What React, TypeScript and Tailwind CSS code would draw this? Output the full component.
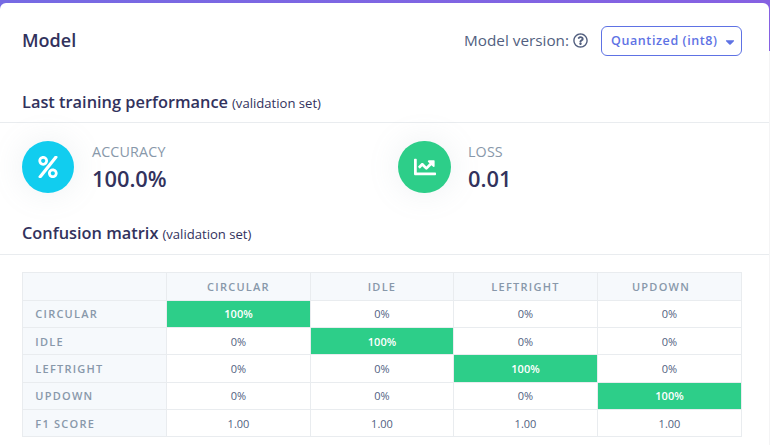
import { FaCaretDown, FaChartLine, FaPercent, FaRegQuestionCircle } from "react-icons/fa";
import type { ReactNode } from "react";

const labels = ["CIRCULAR", "IDLE", "LEFTRIGHT", "UPDOWN"];

const rowOffset: Record<string, string> = {
  CIRCULAR: "",
  IDLE: "pt-[2px]",
  LEFTRIGHT: "pt-[2px]",
  UPDOWN: "",
};

function SectionTitle({ title, className }: { title: string; className: string }) {
  return (
    <div className={`flex items-baseline border-b border-[#e9ecef] pl-[22px] ${className}`}>
      <h2 className="text-[16.36px] leading-[24px] font-semibold">{title}</h2>
      <span className="ml-[4px] text-[13.1px] leading-[20px]">(validation set)</span>
    </div>
  );
}

function Metric({ icon, color, label, value }: { icon: ReactNode; color: string; label: string; value: string }) {
  return (
    <div className="flex w-[376px] shrink-0">
      <div className="w-[70px]">
        <div className={`mt-[18px] flex h-[52px] items-center justify-center rounded-full text-white shadow-[0_0_32px_rgba(136,152,170,0.15)] ${color}`}>
          {icon}
        </div>
      </div>
      <div className="pt-[18px]">
        <div className="text-[14.3px] leading-[22px] tracking-[0.15px] text-[#8898aa]">{label}</div>
        <div className="text-[21.8px] leading-[31px] font-semibold">{value}</div>
      </div>
    </div>
  );
}

function RowLabel({ children, className }: { children: string; className: string }) {
  return (
    <div className={`flex items-center border-r border-b border-[#e9ecef] bg-[#f6f9fc] pl-[12.3px] text-[11px] font-semibold tracking-[1.25px] text-[#8898aa] ${className}`}>
      {children}
    </div>
  );
}

export default function App() {
  return (
    <div className="h-[445px] w-[770px] overflow-hidden bg-[#f4f4f5] bg-[linear-gradient(90deg,#766ae3,#8661e2)] bg-[length:770px_51px] bg-no-repeat pt-[3px] font-['Open_Sans',sans-serif] text-[#32325d]">
      <div className="h-[442px] w-[769px] rounded-t-[6px] bg-white">
        <header className="flex h-[75px] items-center justify-between pr-[27px] pl-[22px]">
          <h1 className="text-[18px] font-semibold">Model</h1>
          <div className="flex items-center text-[#525f7f]">
            <span className="text-[15.3px]">Model version:</span>
            <FaRegQuestionCircle className="mr-[13px] ml-[4px] size-[15px]" />
            <button className="flex h-[30px] w-[141px] items-center rounded-[6px] border border-[#5e72e4] pt-[2px] pl-[9px] text-[12.5px] font-semibold tracking-[0.6px] text-[#5e72e4]">
              Quantized (int8)
              <FaCaretDown className="ml-[5px] size-[14px]" />
            </button>
          </div>
        </header>
        <SectionTitle title="Last training performance" className="h-[45px] pt-[12px]" />
        <div className="flex h-[98px] pl-[22px]">
          <Metric icon={<FaPercent className="size-[22px]" />} color="w-[52px] bg-[#11cdef]" label="ACCURACY" value="100.0%" />
          <Metric icon={<FaChartLine className="size-[22px]" />} color="w-[53px] bg-[#2dce89]" label="LOSS" value="0.01" />
        </div>
        <SectionTitle title="Confusion matrix" className="h-[34px]" />
        <div className="mt-[17px] ml-[22px] grid w-[720px] grid-cols-[144px_144px_143px_144px_144px] grid-rows-[28px_27px_27px_28px_27px_27px] border-t border-l border-[#e9ecef] text-[11px] text-[#525f7f]">
          <div className="border-r border-b border-[#e9ecef] bg-[#f6f9fc]" />
          {labels.map((label) => (
            <div
              key={label}
              className={`flex items-center justify-center border-r border-b border-[#e9ecef] bg-[#f6f9fc] pt-px font-semibold tracking-[1.25px] text-[#8898aa] ${label === "UPDOWN" ? "pr-[17px]" : ""}`}
            >
              {label}
            </div>
          ))}
          {labels.map((row) => (
            <div key={row} className="contents">
              <RowLabel className={rowOffset[row]}>{row}</RowLabel>
              {labels.map((col) => (
                <div
                  key={col}
                  className={`flex items-center justify-center border-r border-b border-[#e9ecef] ${rowOffset[row]} ${row === col ? "bg-[#2dce89] font-semibold text-white" : ""}`}
                >
                  {row === col ? "100%" : "0%"}
                </div>
              ))}
            </div>
          ))}
          <RowLabel className="pt-[2px]">F1 SCORE</RowLabel>
          {labels.map((col) => (
            <div key={col} className="flex items-center justify-center border-r border-b border-[#e9ecef] pt-[2px]">
              1.00
            </div>
          ))}
        </div>
      </div>
    </div>
  );
}
